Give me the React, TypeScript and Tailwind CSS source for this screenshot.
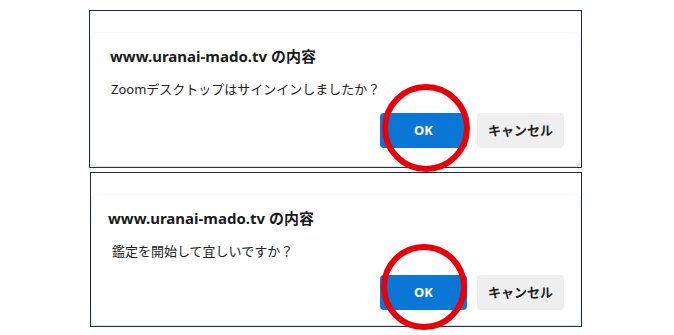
type DialogProps = {
  message: string;
  titleLeft: string;
  circleClass: string;
  heightClass: string;
  widthClass: string;
};

function Dialog({ message, titleLeft, circleClass, heightClass, widthClass }: DialogProps) {
  return (
    <div className={`relative ${widthClass} ${heightClass} border border-[#1b2a47] bg-white`}>
      <div className="absolute inset-x-[1px] top-[22px] bottom-[1px] rounded-[6px] shadow-[0_1px_3px_rgba(120,120,80,0.35)]" />
      <div className="relative pt-[34px]">
        <h2 className={`${titleLeft} text-[15px] leading-[22px] font-bold text-[#1a1a1a]`}>
          www.uranai-mado.tv の内容
        </h2>
        <p className="mt-[12px] pl-[21px] text-[13px] leading-[20px] text-[#222]">{message}</p>
        <div className="mt-[14px] flex justify-end gap-[10px] pr-[17px]">
          <div className="relative">
            <button
              type="button"
              className="w-[87px] h-[35px] rounded-[4px] bg-[#0a76d6] text-[13px] font-bold text-white"
            >
              OK
            </button>
            <div className={`absolute z-10 rounded-full border-[6px] border-[#e8000b] ${circleClass}`} />
          </div>
          <button
            type="button"
            className="w-[87px] h-[35px] rounded-[4px] bg-[#efefef] text-[13px] font-bold text-[#222]"
          >
            キャンセル
          </button>
        </div>
      </div>
    </div>
  );
}

export default function App() {
  return (
    <div
      className="w-[674px] h-[335px] bg-white overflow-hidden"
      style={{ fontFamily: '"Noto Sans", "Noto Sans CJK JP", sans-serif' }}
    >
      <div className="flex flex-col gap-[4px] pt-[10px] pl-[89px]">
        <div className="relative z-20">
          <Dialog
            message="Zoomデスクトップはサインインしましたか？"
            titleLeft="pl-[20px]"
            circleClass="w-[88px] h-[88px] left-[2px] top-[-29px]"
            heightClass="h-[158px]"
            widthClass="w-[493px]"
          />
        </div>
        <div className="ml-[1px]">
          <Dialog
            message="鑑定を開始して宜しいですか？"
            titleLeft="pl-[17px]"
            circleClass="w-[86px] h-[86px] left-[1px] top-[-31px]"
            heightClass="h-[155px]"
            widthClass="w-[492px]"
          />
        </div>
      </div>
    </div>
  );
}
